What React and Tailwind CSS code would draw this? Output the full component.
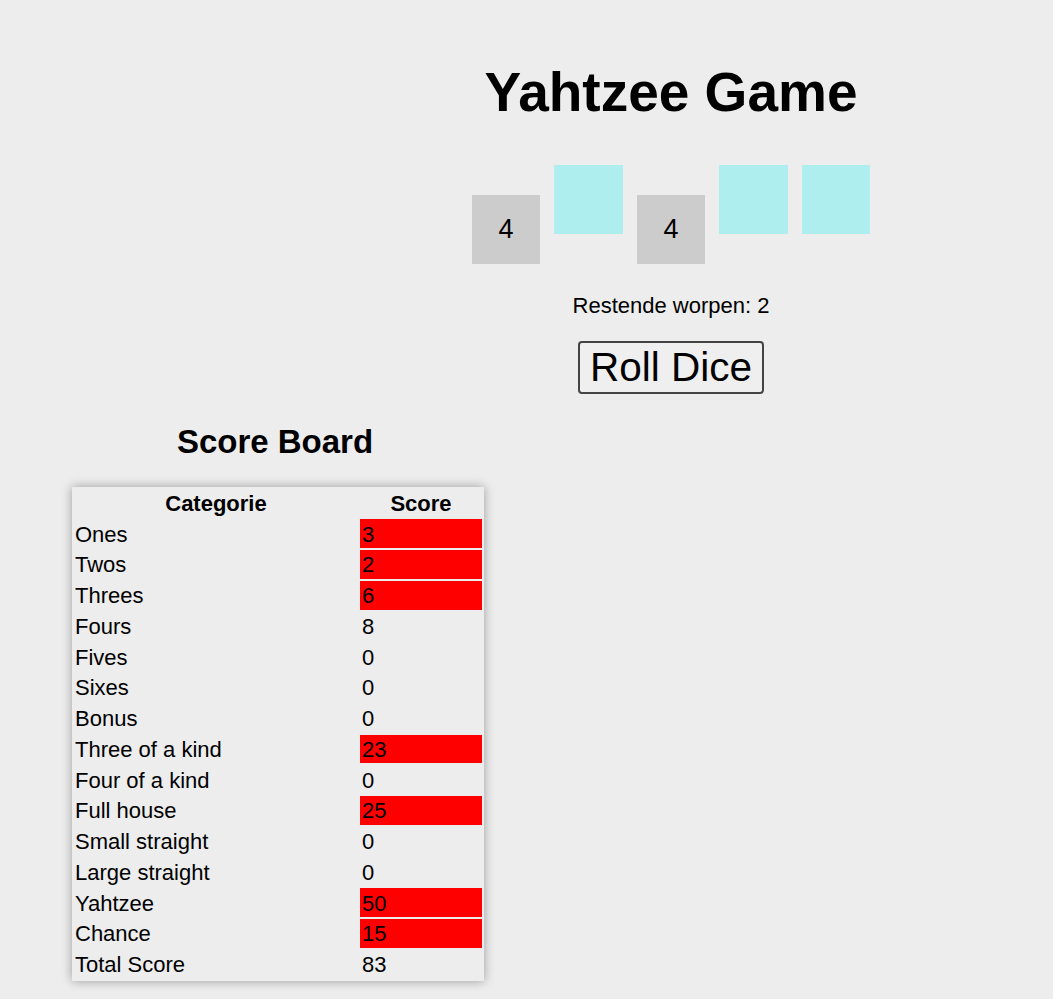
import React from "react";

const rows = [
  ["Ones", "3", true],
  ["Twos", "2", true],
  ["Threes", "6", true],
  ["Fours", "8", false],
  ["Fives", "0", false],
  ["Sixes", "0", false],
  ["Bonus", "0", false],
  ["Three of a kind", "23", true],
  ["Four of a kind", "0", false],
  ["Full house", "25", true],
  ["Small straight", "0", false],
  ["Large straight", "0", false],
  ["Yahtzee", "50", true],
  ["Chance", "15", true],
  ["Total Score", "83", false],
];

const dice = [
  { v: "4", held: false },
  { v: "", held: true },
  { v: "4", held: false },
  { v: "", held: true },
  { v: "", held: true },
];

export default function App() {
  return (
    <div
      className="min-h-[999px] w-[1053px] bg-[#ededed] text-black overflow-hidden"
      style={{ fontFamily: '"Liberation Sans", Arial, sans-serif' }}
    >
      <div className="ml-[289px] w-[764px] flex flex-col items-center pt-[61px]">
        <h1 className="text-[55px] leading-[63px] font-bold">Yahtzee Game</h1>
        <div className="mt-[41px] flex items-start gap-[14px]">
          {dice.map((d, i) =>
            d.held ? (
              <div key={i} className="w-[68.5px] h-[68.5px] bg-[#afeeee]" />
            ) : (
              <div
                key={i}
                className="mt-[30px] w-[68.5px] h-[68.5px] bg-[#cccccc] flex items-center justify-center text-[27px]"
              >
                {d.v}
              </div>
            )
          )}
        </div>
        <p className="mt-[29px] text-[22px] leading-[25px]">Restende worpen: 2</p>
        <button className="mt-[23px] text-[40.5px] leading-[47px] px-[10px] py-[1px] border-2 border-[#444] rounded-[4px] bg-[#efefef]">
          Roll Dice
        </button>
      </div>
      <div className="ml-[72px] w-[412px] flex flex-col items-center">
        <h2 className="mt-[29px] pr-[6px] text-[33px] leading-[37px] font-bold">Score Board</h2>
        <table
          className="mt-[27px] w-[412px] border-separate shadow-[0_0_10px_rgba(0,0,0,0.35)] bg-[#ededed] text-[22px]"
          style={{ borderSpacing: "2px" }}
        >
          <thead>
            <tr className="h-[28.75px]">
              <th className="w-[284px] font-bold leading-[25px] pt-[1px] pb-0 px-0">Categorie</th>
              <th className="w-[122px] font-bold leading-[25px] pt-[1px] pb-0 px-0">Score</th>
            </tr>
          </thead>
          <tbody>
            {rows.map(([name, score, used]) => (
              <tr key={name} className="h-[28.75px]">
                <td className="px-[1px] pt-[1px] pb-0 leading-[25px]">{name}</td>
                <td className={"px-[2px] pt-[1px] pb-0 leading-[25px] " + (used ? "bg-[#ff0000]" : "")}>
                  {score}
                </td>
              </tr>
            ))}
          </tbody>
        </table>
      </div>
    </div>
  );
}
